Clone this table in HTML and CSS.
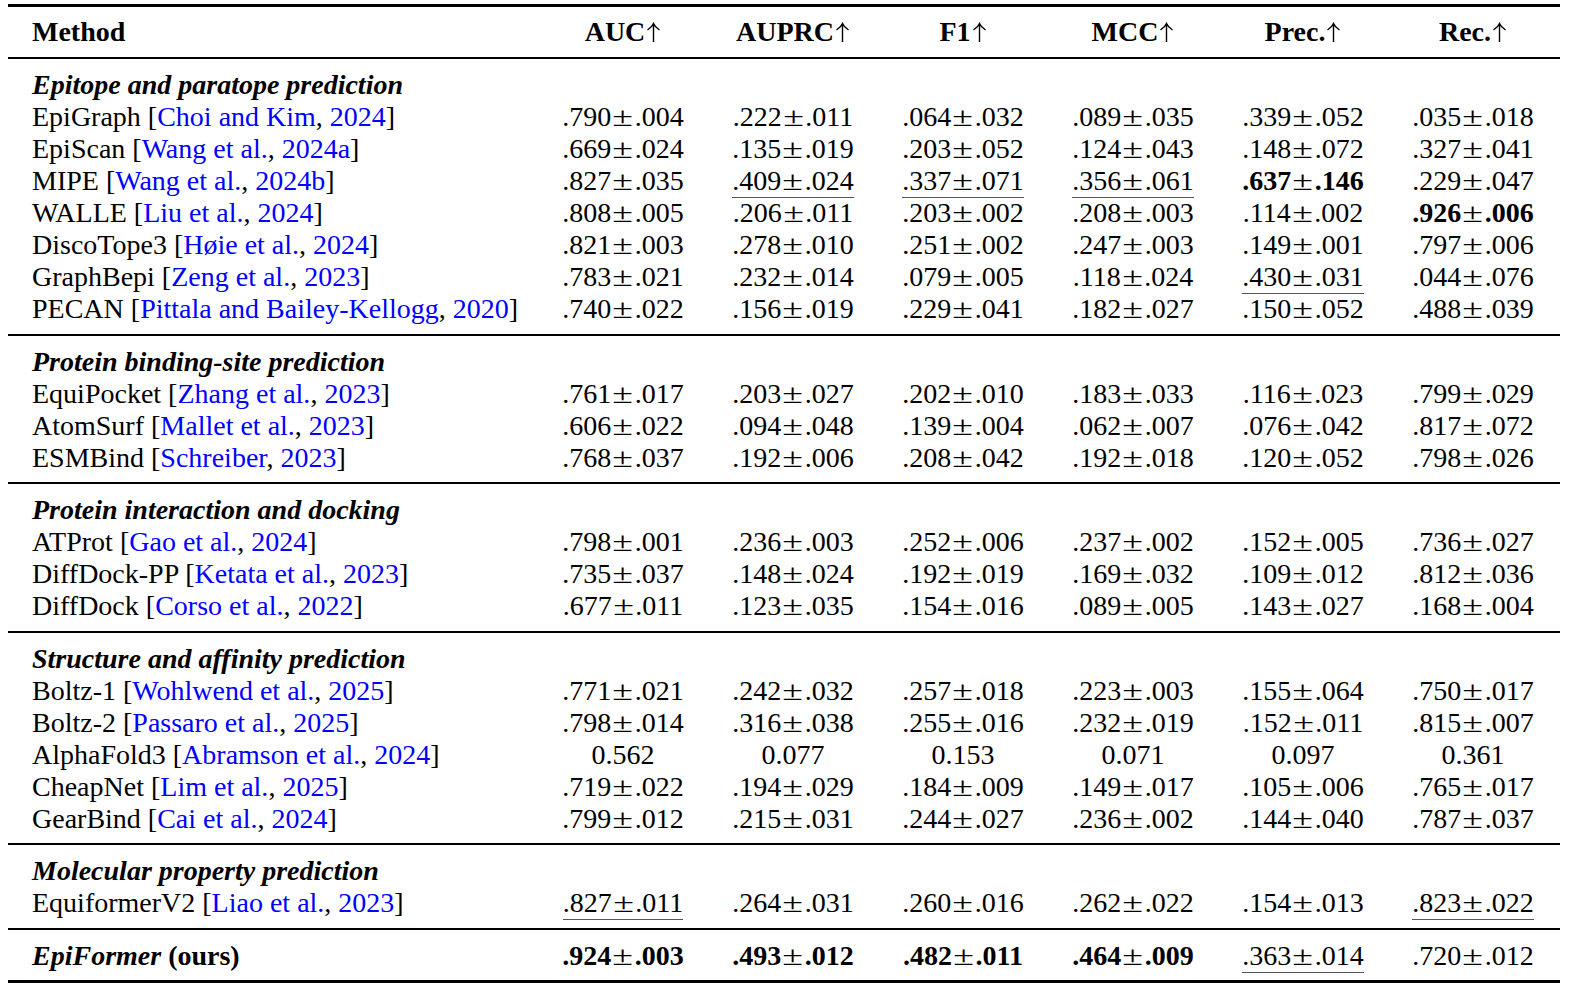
FILE: index.html
```html
<!DOCTYPE html>
<html lang="en">
<head>
<meta charset="UTF-8">
<title>Binding-site prediction results</title>
<link rel="stylesheet" href="styles.css">
</head>
<body>

<div class="results">

  <!-- Header -->
  <div class="row head">
    <div class="name">Method</div>
    <div>AUC<svg class="up" viewBox="0 0 15 20"><path d="M7.5 1.5V20M1.5 8C4.5 6 6.5 4 7.5 1.5C8.5 4 10.5 6 13.5 8"/></svg></div>
    <div>AUPRC<svg class="up" viewBox="0 0 15 20"><path d="M7.5 1.5V20M1.5 8C4.5 6 6.5 4 7.5 1.5C8.5 4 10.5 6 13.5 8"/></svg></div>
    <div>F1<svg class="up" viewBox="0 0 15 20"><path d="M7.5 1.5V20M1.5 8C4.5 6 6.5 4 7.5 1.5C8.5 4 10.5 6 13.5 8"/></svg></div>
    <div>MCC<svg class="up" viewBox="0 0 15 20"><path d="M7.5 1.5V20M1.5 8C4.5 6 6.5 4 7.5 1.5C8.5 4 10.5 6 13.5 8"/></svg></div>
    <div>Prec.<svg class="up" viewBox="0 0 15 20"><path d="M7.5 1.5V20M1.5 8C4.5 6 6.5 4 7.5 1.5C8.5 4 10.5 6 13.5 8"/></svg></div>
    <div>Rec.<svg class="up" viewBox="0 0 15 20"><path d="M7.5 1.5V20M1.5 8C4.5 6 6.5 4 7.5 1.5C8.5 4 10.5 6 13.5 8"/></svg></div>
  </div>

  <!-- Epitope and paratope -->
  <div class="group">
    <div class="title">Epitope and paratope prediction</div>
    <div class="row">
      <div class="name">EpiGraph [<a href="#">Choi and Kim</a>, <a href="#">2024</a>]</div>
      <div>.790<span class="pm">±</span>.004</div>
      <div>.222<span class="pm">±</span>.011</div>
      <div>.064<span class="pm">±</span>.032</div>
      <div>.089<span class="pm">±</span>.035</div>
      <div>.339<span class="pm">±</span>.052</div>
      <div>.035<span class="pm">±</span>.018</div>
    </div>
    <div class="row">
      <div class="name">EpiScan [<a href="#">Wang et al.</a>, <a href="#">2024a</a>]</div>
      <div>.669<span class="pm">±</span>.024</div>
      <div>.135<span class="pm">±</span>.019</div>
      <div>.203<span class="pm">±</span>.052</div>
      <div>.124<span class="pm">±</span>.043</div>
      <div>.148<span class="pm">±</span>.072</div>
      <div>.327<span class="pm">±</span>.041</div>
    </div>
    <div class="row">
      <div class="name">MIPE [<a href="#">Wang et al.</a>, <a href="#">2024b</a>]</div>
      <div>.827<span class="pm">±</span>.035</div>
      <div><span class="second">.409<span class="pm">±</span>.024</span></div>
      <div><span class="second">.337<span class="pm">±</span>.071</span></div>
      <div><span class="second">.356<span class="pm">±</span>.061</span></div>
      <div class="best">.637<span class="pm">±</span>.146</div>
      <div>.229<span class="pm">±</span>.047</div>
    </div>
    <div class="row">
      <div class="name">WALLE [<a href="#">Liu et al.</a>, <a href="#">2024</a>]</div>
      <div>.808<span class="pm">±</span>.005</div>
      <div>.206<span class="pm">±</span>.011</div>
      <div>.203<span class="pm">±</span>.002</div>
      <div>.208<span class="pm">±</span>.003</div>
      <div>.114<span class="pm">±</span>.002</div>
      <div class="best">.926<span class="pm">±</span>.006</div>
    </div>
    <div class="row">
      <div class="name">DiscoTope3 [<a href="#">Høie et al.</a>, <a href="#">2024</a>]</div>
      <div>.821<span class="pm">±</span>.003</div>
      <div>.278<span class="pm">±</span>.010</div>
      <div>.251<span class="pm">±</span>.002</div>
      <div>.247<span class="pm">±</span>.003</div>
      <div>.149<span class="pm">±</span>.001</div>
      <div>.797<span class="pm">±</span>.006</div>
    </div>
    <div class="row">
      <div class="name">GraphBepi [<a href="#">Zeng et al.</a>, <a href="#">2023</a>]</div>
      <div>.783<span class="pm">±</span>.021</div>
      <div>.232<span class="pm">±</span>.014</div>
      <div>.079<span class="pm">±</span>.005</div>
      <div>.118<span class="pm">±</span>.024</div>
      <div><span class="second">.430<span class="pm">±</span>.031</span></div>
      <div>.044<span class="pm">±</span>.076</div>
    </div>
    <div class="row">
      <div class="name">PECAN [<a href="#">Pittala and Bailey-Kellogg</a>, <a href="#">2020</a>]</div>
      <div>.740<span class="pm">±</span>.022</div>
      <div>.156<span class="pm">±</span>.019</div>
      <div>.229<span class="pm">±</span>.041</div>
      <div>.182<span class="pm">±</span>.027</div>
      <div>.150<span class="pm">±</span>.052</div>
      <div>.488<span class="pm">±</span>.039</div>
    </div>
  </div>

  <!-- Binding site -->
  <div class="group">
    <div class="title">Protein binding-site prediction</div>
    <div class="row">
      <div class="name">EquiPocket [<a href="#">Zhang et al.</a>, <a href="#">2023</a>]</div>
      <div>.761<span class="pm">±</span>.017</div>
      <div>.203<span class="pm">±</span>.027</div>
      <div>.202<span class="pm">±</span>.010</div>
      <div>.183<span class="pm">±</span>.033</div>
      <div>.116<span class="pm">±</span>.023</div>
      <div>.799<span class="pm">±</span>.029</div>
    </div>
    <div class="row">
      <div class="name">AtomSurf [<a href="#">Mallet et al.</a>, <a href="#">2023</a>]</div>
      <div>.606<span class="pm">±</span>.022</div>
      <div>.094<span class="pm">±</span>.048</div>
      <div>.139<span class="pm">±</span>.004</div>
      <div>.062<span class="pm">±</span>.007</div>
      <div>.076<span class="pm">±</span>.042</div>
      <div>.817<span class="pm">±</span>.072</div>
    </div>
    <div class="row">
      <div class="name">ESMBind [<a href="#">Schreiber</a>, <a href="#">2023</a>]</div>
      <div>.768<span class="pm">±</span>.037</div>
      <div>.192<span class="pm">±</span>.006</div>
      <div>.208<span class="pm">±</span>.042</div>
      <div>.192<span class="pm">±</span>.018</div>
      <div>.120<span class="pm">±</span>.052</div>
      <div>.798<span class="pm">±</span>.026</div>
    </div>
  </div>

  <!-- Interaction and docking -->
  <div class="group">
    <div class="title">Protein interaction and docking</div>
    <div class="row">
      <div class="name">ATProt [<a href="#">Gao et al.</a>, <a href="#">2024</a>]</div>
      <div>.798<span class="pm">±</span>.001</div>
      <div>.236<span class="pm">±</span>.003</div>
      <div>.252<span class="pm">±</span>.006</div>
      <div>.237<span class="pm">±</span>.002</div>
      <div>.152<span class="pm">±</span>.005</div>
      <div>.736<span class="pm">±</span>.027</div>
    </div>
    <div class="row">
      <div class="name">DiffDock-PP [<a href="#">Ketata et al.</a>, <a href="#">2023</a>]</div>
      <div>.735<span class="pm">±</span>.037</div>
      <div>.148<span class="pm">±</span>.024</div>
      <div>.192<span class="pm">±</span>.019</div>
      <div>.169<span class="pm">±</span>.032</div>
      <div>.109<span class="pm">±</span>.012</div>
      <div>.812<span class="pm">±</span>.036</div>
    </div>
    <div class="row">
      <div class="name">DiffDock [<a href="#">Corso et al.</a>, <a href="#">2022</a>]</div>
      <div>.677<span class="pm">±</span>.011</div>
      <div>.123<span class="pm">±</span>.035</div>
      <div>.154<span class="pm">±</span>.016</div>
      <div>.089<span class="pm">±</span>.005</div>
      <div>.143<span class="pm">±</span>.027</div>
      <div>.168<span class="pm">±</span>.004</div>
    </div>
  </div>

  <!-- Structure and affinity -->
  <div class="group">
    <div class="title">Structure and affinity prediction</div>
    <div class="row">
      <div class="name">Boltz-1 [<a href="#">Wohlwend et al.</a>, <a href="#">2025</a>]</div>
      <div>.771<span class="pm">±</span>.021</div>
      <div>.242<span class="pm">±</span>.032</div>
      <div>.257<span class="pm">±</span>.018</div>
      <div>.223<span class="pm">±</span>.003</div>
      <div>.155<span class="pm">±</span>.064</div>
      <div>.750<span class="pm">±</span>.017</div>
    </div>
    <div class="row">
      <div class="name">Boltz-2 [<a href="#">Passaro et al.</a>, <a href="#">2025</a>]</div>
      <div>.798<span class="pm">±</span>.014</div>
      <div>.316<span class="pm">±</span>.038</div>
      <div>.255<span class="pm">±</span>.016</div>
      <div>.232<span class="pm">±</span>.019</div>
      <div>.152<span class="pm">±</span>.011</div>
      <div>.815<span class="pm">±</span>.007</div>
    </div>
    <div class="row">
      <div class="name">AlphaFold3 [<a href="#">Abramson et al.</a>, <a href="#">2024</a>]</div>
      <div>0.562</div>
      <div>0.077</div>
      <div>0.153</div>
      <div>0.071</div>
      <div>0.097</div>
      <div>0.361</div>
    </div>
    <div class="row">
      <div class="name">CheapNet [<a href="#">Lim et al.</a>, <a href="#">2025</a>]</div>
      <div>.719<span class="pm">±</span>.022</div>
      <div>.194<span class="pm">±</span>.029</div>
      <div>.184<span class="pm">±</span>.009</div>
      <div>.149<span class="pm">±</span>.017</div>
      <div>.105<span class="pm">±</span>.006</div>
      <div>.765<span class="pm">±</span>.017</div>
    </div>
    <div class="row">
      <div class="name">GearBind [<a href="#">Cai et al.</a>, <a href="#">2024</a>]</div>
      <div>.799<span class="pm">±</span>.012</div>
      <div>.215<span class="pm">±</span>.031</div>
      <div>.244<span class="pm">±</span>.027</div>
      <div>.236<span class="pm">±</span>.002</div>
      <div>.144<span class="pm">±</span>.040</div>
      <div>.787<span class="pm">±</span>.037</div>
    </div>
  </div>

  <!-- Molecular property -->
  <div class="group">
    <div class="title">Molecular property prediction</div>
    <div class="row">
      <div class="name">EquiformerV2 [<a href="#">Liao et al.</a>, <a href="#">2023</a>]</div>
      <div><span class="second">.827<span class="pm">±</span>.011</span></div>
      <div>.264<span class="pm">±</span>.031</div>
      <div>.260<span class="pm">±</span>.016</div>
      <div>.262<span class="pm">±</span>.022</div>
      <div>.154<span class="pm">±</span>.013</div>
      <div><span class="second">.823<span class="pm">±</span>.022</span></div>
    </div>
  </div>

  <!-- Ours -->
  <div class="group last">
    <div class="row">
      <div class="name ours"><em>EpiFormer</em> (ours)</div>
      <div class="best">.924<span class="pm">±</span>.003</div>
      <div class="best">.493<span class="pm">±</span>.012</div>
      <div class="best">.482<span class="pm">±</span>.011</div>
      <div class="best">.464<span class="pm">±</span>.009</div>
      <div><span class="second">.363<span class="pm">±</span>.014</span></div>
      <div>.720<span class="pm">±</span>.012</div>
    </div>
  </div>

</div>

</body>
</html>
```

FILE: styles.css
```css
body {
  margin: 0;
  background: #fff;
  color: #000;
  font-family: "Liberation Serif", "Times New Roman", serif;
  font-size: 28px;
}

/* Whole table */
.results {
  width: 1552px;
  margin: 4px 0 0 8px;
  border-top: 3px solid #000;
}

.row {
  display: grid;
  grid-template-columns: 530px repeat(6, 170px);
  height: 32px;
  line-height: 32px;
  text-align: center;
  white-space: nowrap;
}

.row .name {
  text-align: left;
  padding-left: 24px;
}

/* Header row */
.head {
  height: 50px;
  line-height: 50px;
  font-weight: bold;
  border-bottom: 2px solid #000;
}

.up {
  width: 15px;
  height: 20px;
  margin-left: 1px;
  vertical-align: -1px;
  fill: none;
  stroke: #000;
  stroke-width: 1.4;
}

/* Groups of methods */
.group {
  padding: 10px 0 8.5px;
  border-bottom: 2px solid #000;
}

.group.last {
  border-bottom-width: 3px;
}

.title {
  height: 32px;
  line-height: 32px;
  padding-left: 24px;
  font-weight: bold;
  font-style: italic;
}

a {
  color: #0000ff;
  text-decoration: none;
}

.pm {
  display: inline-block;
  margin: 0 4px;
  font-weight: normal;
  transform: scaleX(1.35);
}

.best {
  font-weight: bold;
}

.second {
  display: inline-block;
  border-bottom: 1.5px solid #555;
}

.ours {
  font-weight: bold;
}
```
